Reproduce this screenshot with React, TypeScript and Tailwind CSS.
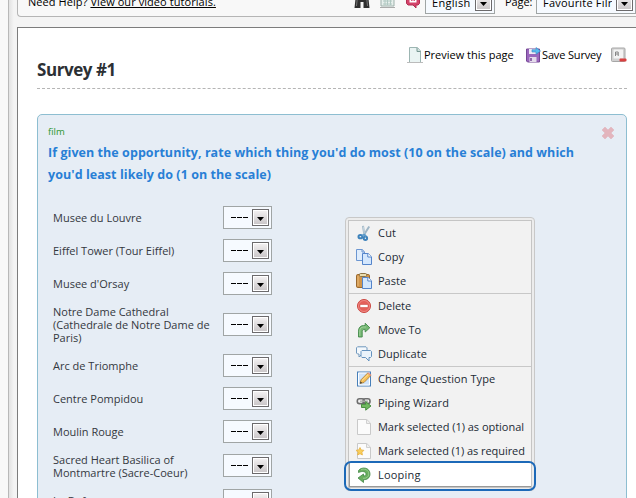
import type { ReactNode } from "react";

function Svg({ children, className = "" }: { children: ReactNode; className?: string }) {
  return (
    <svg viewBox="0 0 16 16" className={"h-4 w-4 shrink-0 " + className} fill="none">
      {children}
    </svg>
  );
}

const icons: Record<string, ReactNode> = {
  cut: (
    <Svg>
      <path d="M7 .8 8.400 10M13.200 1.500 7.600 10.500" stroke="#9fb6c6" strokeWidth="2" />
      <path d="M7.300 1.500 8.300 9" stroke="#d5e2ea" strokeWidth="0.7" />
      <ellipse cx="4.400" cy="11.700" rx="1.900" ry="1.600" stroke="#3f83bb" strokeWidth="2" />
      <ellipse cx="9.400" cy="13.300" rx="1.700" ry="1.700" stroke="#3f83bb" strokeWidth="2" />
      <path d="m6 10.500 2.500-1 1.500 2" stroke="#5b9aca" strokeWidth="1.800" />
    </Svg>
  ),
  copy: (
    <Svg>
      <path d="M.5.5h5.700l2.300 2.300v8.700h-8z" fill="#e0edfc" stroke="#6c96d1" />
      <path d="M6 .5V3h2.500" stroke="#6c96d1" />
      <path d="M6.500 4.500h5.700l3.300 3.300v7.700h-9z" fill="#d4e7fd" stroke="#5585cb" />
      <path d="M11.800 4.500V8h3.700" fill="#fff" stroke="#5585cb" />
    </Svg>
  ),
  paste: (
    <Svg>
      <rect x=".5" y="1.500" width="13" height="13" rx="1.200" fill="#d1954b" stroke="#99682e" />
      <path d="M2 3v10" stroke="#e9bd7e" />
      <rect x="3.500" y=".5" width="7" height="3" rx="1" fill="#e9dcae" stroke="#8c7345" />
      <path d="M6.500 4.500h5.700l3.300 3.300v7.700h-9z" fill="#d4e7fd" stroke="#5585cb" />
      <path d="M11.800 4.500V8h3.700" fill="#fff" stroke="#5585cb" />
    </Svg>
  ),
  remove: (
    <Svg>
      <circle cx="8" cy="8" r="6.500" fill="#e4605a" stroke="#cb4640" />
      <circle cx="8" cy="8" r="5.500" stroke="#f0948f" strokeWidth=".8" />
      <path d="M4 6.500h8v3H4z" fill="#fff" stroke="#c94039" strokeWidth=".5" />
    </Svg>
  ),
  move: (
    <Svg>
      <path
        d="M2.500 15V9.200C2.500 5.600 4.600 3.600 7.500 3.600h1.700V1.200L13.800 5.800l-4.600 4.200V7.600H7.800C6.500 7.600 6.200 8.500 6.200 9.800V15z"
        fill="#76b873"
        stroke="#43894a"
        strokeWidth=".9"
      />
      <path d="M3.800 14V9c0-2.500 1.400-4 3.800-4h2.500" stroke="#a9d7a3" strokeWidth=".8" />
    </Svg>
  ),
  duplicate: (
    <Svg>
      <path d="M1.500.8h8.500l1 1V7L10 8H6l-3 3V8H1.500l-1-1V1.800z" fill="#f4f8fc" stroke="#7098bd" />
      <path d="M6 4.500h8.500l1 1v5l-1 1H13V15l-3.500-3.500H6l-1-1v-5z" fill="#eaf3fb" stroke="#6593bf" />
    </Svg>
  ),
  change: (
    <Svg>
      <rect x="1.500" y="1" width="13" height="14" fill="#cfe3fa" stroke="#467fb9" />
      <path d="M2.500 2h11v12h-11z" stroke="#fff" />
      <path d="m4 12.500 1-3.700L11.700 2l3 2.700L8 11.500z" fill="#f6bf57" stroke="#a77c37" strokeWidth=".8" />
      <path d="m6 9.500 6.500-6.300" stroke="#ffe4a1" />
      <path d="m4 12.500.6-2 1.600 1.400z" fill="#333" />
      <path d="m11.500 2.200 1-1 3 2.800-1 1z" fill="#e59382" />
    </Svg>
  ),
  piping: (
    <Svg>
      <rect x="1.300" y="3.800" width="7" height="4.800" rx="2.200" stroke="#6e6e6e" strokeWidth="1.600" />
      <rect x="7" y="3.800" width="7" height="4.800" rx="2.200" stroke="#6e6e6e" strokeWidth="1.600" />
      <path d="M4 6.200h8" stroke="#b0b0b0" strokeWidth="1.400" />
      <path d="M5.500 9.300h4.200V6.600L15 11l-5.300 4.200v-2.700H5.500z" fill="#71b961" stroke="#3e8738" strokeWidth=".9" />
    </Svg>
  ),
  optional: (
    <Svg>
      <path d="M1.500.5h9.300l3.700 3.700v11.300h-13z" fill="#fbfbfb" stroke="#c9c9c9" />
      <path d="M10.500 1v3.500H14" fill="#eee" stroke="#d0d0d0" />
    </Svg>
  ),
  required: (
    <Svg>
      <path d="M1.500.5h9.300l3.700 3.700v11.300h-13z" fill="#fbfbfb" stroke="#c9c9c9" />
      <path d="M10.500 1v3.500H14" fill="#eee" stroke="#d0d0d0" />
      <path d="m4 4.500 1.200 2.400 2.700.4L6 9.300l.4 2.700L4 10.700 1.600 12 2 9.300 0 7.300l2.700-.4z" fill="#f9ce5b" stroke="#e5aa35" strokeWidth=".7" />
    </Svg>
  ),
  looping: (
    <Svg>
      <path
        d="M2.500 3.500C6-.8 14 .6 14 7c0 4-3.200 6-6.500 5.600V15.500L2 11l5.500-4v2c1.700 0 2.500-.8 2.500-2C10 4.700 6.500 3.600 2.500 5.500z"
        fill="#69ae5e"
        stroke="#438746"
        strokeWidth=".8"
      />
      <path d="M5 2.800c3-1.600 7.800-.3 7.800 4.200 0 3-2.500 4.600-5.800 4.300" stroke="#a0d297" strokeWidth=".8" />
    </Svg>
  ),
};

const menu: { icon: string; label: string; track: string }[][] = [
  [
    { icon: "cut", label: "Cut", track: "tracking-[0.2px]" },
    { icon: "copy", label: "Copy", track: "tracking-[0.1px]" },
    { icon: "paste", label: "Paste", track: "tracking-normal" },
  ],
  [
    { icon: "remove", label: "Delete", track: "tracking-normal" },
    { icon: "move", label: "Move To", track: "-tracking-[0.1px]" },
    { icon: "duplicate", label: "Duplicate", track: "tracking-[0.05px]" },
  ],
  [
    { icon: "change", label: "Change Question Type", track: "tracking-[0.08px]" },
    { icon: "piping", label: "Piping Wizard", track: "tracking-[0.08px]" },
    { icon: "optional", label: "Mark selected (1) as optional", track: "-tracking-[0.02px]" },
    { icon: "required", label: "Mark selected (1) as required", track: "-tracking-[0.06px]" },
    { icon: "looping", label: "Looping", track: "tracking-[0.2px]" },
  ],
];

function DropButton() {
  return (
    <span className="flex h-[17px] w-[17px] shrink-0 items-center justify-center border border-[#6c6a6c] bg-linear-to-b from-[#f5f3f4] to-[#c8c4c6] shadow-[inset_0_0_0_1px_#fff]">
      <svg viewBox="0 0 7 4" className="mt-[2px] h-1 w-[7px]">
        <path d="M0 0h7L3.500 4z" fill="#000" />
      </svg>
    </span>
  );
}

function Select({ className, children }: { className: string; children: ReactNode }) {
  return (
    <div className={"flex h-[23px] shrink-0 items-center justify-between border border-[#a0a5a5] bg-[#f6faff] pr-[2px] pl-[6px] text-black " + className}>
      <span className="min-w-0 overflow-hidden">{children}</span>
      <DropButton />
    </div>
  );
}

const rows = [
  { lines: ["Musee du Louvre"], h: "h-[33px]" },
  { lines: ["Eiffel Tower (Tour Eiffel)"], h: "h-[33px]" },
  { lines: ["Musee d'Orsay"], h: "h-[33px]" },
  { lines: ["Notre Dame Cathedral", "(Cathedrale de Notre Dame de", "Paris)"], h: "h-[49px]" },
  { lines: ["Arc de Triomphe"], h: "h-[33px]" },
  { lines: ["Centre Pompidou"], h: "h-[33px]" },
  { lines: ["Moulin Rouge"], h: "h-[33px]" },
  { lines: ["Sacred Heart Basilica of", "Montmartre (Sacre-Coeur)"], h: "h-[35px]" },
  { lines: ["La Defense"], h: "h-[35px]" },
];

function TopBar() {
  return (
    <div className="flex h-[17px] shrink-0 items-end overflow-hidden rounded-bl-[4px] border-b border-l border-[#b5b5b5] bg-[#f8f8f8] text-[11px] leading-[15px] text-black">
      <div className="mb-[7px] ml-[10px] w-[326px] shrink-0 whitespace-nowrap tracking-[0.07px]">
        Need Help? <span className="underline decoration-1 underline-offset-1">View our video tutorials.</span>
      </div>
      <Svg className="mb-[7px]">
        <path d="M2 1h5v3h2V1h5l1.500 14h-6V9h-3v6h-6z" fill="#303030" />
        <path d="M3.500 3 2.500 13M12.500 3l1 10" stroke="#777" />
      </Svg>
      <Svg className="mb-[7px] ml-[9px]">
        <path d="M2 1h13v12H2z" fill="#e7efec" stroke="#9db0ab" />
        <path d="M4 5h9M4 8h9M4 11h9M6 3v9m2.500-9v9m3-9v9" stroke="#b0c8c2" />
        <path d="M1 14.500h15" stroke="#aaa" />
      </Svg>
      <Svg className="mb-[7px] ml-[10px]">
        <path d="M1.500 1h13v9.500l-1.500 1.500h-2v3l-3-3H3l-1.500-1.500z" fill="#d4436a" stroke="#b22d51" />
        <path d="M4.500 2v7.500h7V2z" fill="#fff" />
        <path d="M6.800 3v5M9.200 3v5" stroke="#d4436a" strokeWidth="1.300" />
      </Svg>
      <Select className="mb-[2px] ml-[4px] w-[70px] tracking-[0.3px]">English</Select>
      <span className="mb-[7px] ml-[10px] w-[31px] shrink-0 -tracking-[0.1px]">Page:</span>
      <Select className="mb-[2px] w-[100px] whitespace-nowrap tracking-[0.2px]">Favourite Filr</Select>
    </div>
  );
}

function SurveyHeader() {
  return (
    <header className="flex h-[61px] items-start justify-between border-b border-dashed border-[#b5b5b5]">
      <h1 className="mt-[30px] text-[17px] leading-6 font-bold -tracking-[0.45px] whitespace-nowrap text-[#2c3034]">Survey #1</h1>
      <div className="mt-[19px] flex h-4 items-center text-[11px] leading-4 whitespace-nowrap text-black">
        <Svg>
          <path d="M2.500.5h8L13.500 4v11.500h-11z" fill="#eaf4f3" stroke="#9cb5b2" />
          <path d="M10 1v3.500h3.500" fill="#cfe0dd" stroke="#769791" />
          <path d="M0 15.500h16" stroke="#bbb" />
        </Svg>
        <span className="ml-px w-[101px]">Preview this page</span>
        <Svg>
          <path d="M1.500 2h13v13h-12l-1-1z" fill="#9b67bd" stroke="#744795" />
          <path d="M4 2h8v5H4z" fill="#f0eaf6" />
          <path d="M4.500 10h7v5h-7z" fill="#e5dcec" />
          <path d="M6 11v3" stroke="#744795" strokeWidth="1.500" />
          <path d="M7 2.700h4V.5L15.500 4 11 7.300V5H7z" fill="#5abcf0" stroke="#3687c4" strokeWidth=".6" />
        </Svg>
        <span className="ml-[1px] w-[69px] -tracking-[0.15px]">Save Survey</span>
        <Svg>
          <rect x=".5" y="1" width="13.500" height="13.500" rx="1" fill="#d0d0d0" stroke="#a7a7a7" />
          <rect x="2.500" y="2.500" width="9.500" height="9" rx=".5" fill="#f3f3f3" />
          <path d="M4.500 9V5h2.700v4M4.500 7h2.700" stroke="#858585" />
          <rect x="8.500" y="11.500" width="7" height="3" rx="1" fill="#d94040" />
        </Svg>
      </div>
    </header>
  );
}

function QuestionCard() {
  return (
    <section className="mt-[25px] h-[420px] rounded-[5px] border border-[#8dbed1] bg-[#e6edf5]">
      <div className="mt-[9px] flex h-4 items-center justify-between pr-[10px] pl-[10px]">
        <span className="text-[9.500px] text-[#2c962c]">film</span>
        <Svg className="mt-[2px]">
          <path d="m2 5 3-3 3 3 3-3 3 3-3 3 3 3-3 3-3-3-3 3-3-3 3-3z" fill="#e3b5bd" stroke="#dfbdc5" strokeWidth=".8" />
        </Svg>
      </div>
      <h2 className="mt-[2px] pl-[10px] text-[12.500px] leading-[22px] font-bold tracking-[0.06px] whitespace-nowrap text-[#287fd6]">
        <span className="block">If given the opportunity, rate which thing you'd do most (10 on the scale) and which</span>
        <span className="block">you'd least likely do (1 on the scale)</span>
      </h2>
      <div className="mt-[15px] pl-[15px]">
        {rows.map((row) => (
          <div key={row.lines[0]} className={"flex items-center " + row.h}>
            <div className="w-[170px] shrink-0 text-[11px] leading-[13px] whitespace-nowrap text-[#34383e]">
              {row.lines.map((line) => (
                <span key={line} className="block">
                  {line}
                </span>
              ))}
            </div>
            <Select className="w-[49px] text-[11px] leading-[15px]">
              <span className="ml-px flex gap-px">
                <i className="h-px w-[5px] bg-black" />
                <i className="h-px w-[5px] bg-black" />
                <i className="h-px w-[5px] bg-black" />
              </span>
            </Select>
          </div>
        ))}
      </div>
    </section>
  );
}

function ContextMenu() {
  return (
    <div className="absolute top-[217px] left-[345px] w-[190px] rounded-[4px] border border-[#c8c8c8] bg-[#ececec] p-[2px]">
      <div className="border border-[#c5c5c5] bg-[#f2f2f2]">
        {menu.map((group, i) => (
          <div key={i} className={i ? "border-t border-[#c8c8c8]" : ""}>
            {group.map((item) => (
              <div
                key={item.icon}
                className={
                  "flex h-6 items-center pl-[7px] " +
                  (item.icon === "looping" ? "bg-white shadow-[inset_1px_-1px_0_#999]" : "")
                }
              >
                {icons[item.icon]}
                <span className={"ml-[6px] text-[11px] leading-4 whitespace-nowrap text-[#222b35] " + item.track}>{item.label}</span>
              </div>
            ))}
          </div>
        ))}
      </div>
      <div className="absolute -right-[2px] -bottom-px -left-[2px] h-[30px] rounded-[7px] border-2 border-[#1c69b8]" />
    </div>
  );
}

export default function App() {
  return (
    <div className="relative flex h-[498px] w-[636px] overflow-hidden bg-[#f4f4f4] font-['Open_Sans','Noto_Sans',sans-serif]">
      <aside className="w-[9px] shrink-0 border-r border-[#b8b8b8] bg-[#f8f8f8]" />
      <div className="w-2 shrink-0 bg-linear-to-r from-[#e2e2e2] to-[#f4f4f4] to-60%" />
      <main className="flex min-w-0 flex-1 flex-col">
        <TopBar />
        <div className="mt-[10px] flex-1 border-t border-l border-[#7c7c7c] bg-white pr-[9px] pl-[19px]">
          <SurveyHeader />
          <QuestionCard />
        </div>
      </main>
      <ContextMenu />
    </div>
  );
}
